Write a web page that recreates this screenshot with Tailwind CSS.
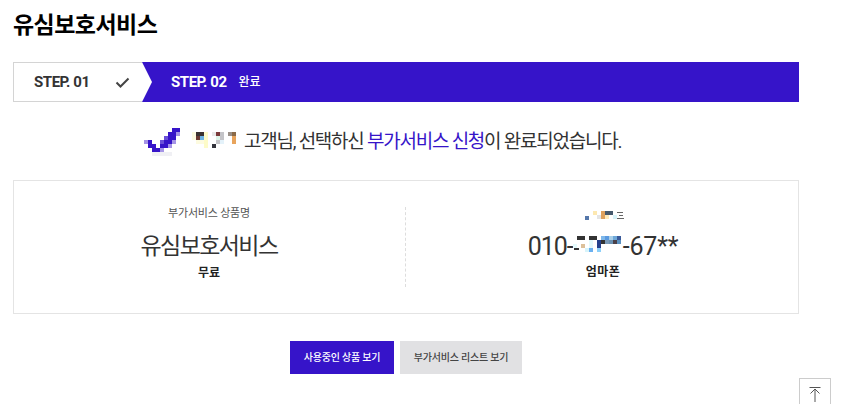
<!DOCTYPE html>
<html lang="ko">
<head>
  <meta charset="UTF-8">
  <title>유심보호서비스</title>
  <script src="https://cdn.jsdelivr.net/npm/@tailwindcss/browser@4"></script>
</head>
<body class="bg-white text-[#222] font-['Roboto','Noto_Sans_CJK_KR',sans-serif] overflow-hidden h-[404px] relative">
  <div class="w-[786px] ml-[13px]">
    <h1 class="h-[62px] pt-[9px] text-[23px] leading-[33px] font-bold text-black tracking-[-0.55px]">유심보호서비스</h1>

    <!-- steps -->
    <div class="flex h-10 bg-[#3614c9]">
      <div class="relative w-[129px] border border-r-0 border-[#d4d4d4] bg-white flex items-center pl-5 text-[15px] font-bold text-[#333] tracking-[-0.45px]">
        <span>STEP. 01</span>
        <svg class="absolute left-[101px] top-[13px]" width="15" height="13" viewBox="0 0 15 13" fill="none" stroke="#444" stroke-width="2"><path d="M1.5 6.5 L5.5 10.5 L13.5 2.5"/></svg>
        <svg class="absolute left-[128px] -top-px" width="10" height="40" viewBox="0 0 10 40"><path d="M0 0 L10 20 L0 40 Z" fill="#fff"/></svg>
      </div>
      <div class="flex items-center pl-[29px] text-white">
        <span class="text-[15px] font-bold tracking-[-0.45px]">STEP. 02</span>
        <span class="ml-3 text-[12px] font-medium">완료</span>
      </div>
    </div>

    <!-- message -->
    <div class="flex items-center h-[78px] pl-[131px] pt-[2px]">
      <svg width="36" height="28" viewBox="0 0 36 28" shape-rendering="crispEdges">
        <path fill="#3614c9" d="M28 0h8v4h-8zM24 4h8v4h-8zM24 8h8v4h-8zM4 12h4v4H4zM20 12h8v4h-8zM4 16h8v4H4zM16 16h8v4h-8zM8 20h8v4H8z"/>
        <path fill="#6a50d8" d="M20 8h4v4h-4zM16 12h4v4h-4z"/>
        <path fill="#a594e6" d="M32 4h4v4h-4zM0 12h4v4H0zM28 12h4v4h-4zM24 16h4v4h-4zM16 20h4v4h-4z"/>
        <path fill="#f0f0f4" d="M8 24h20v4H8z"/>
      </svg>
      <svg class="ml-[12px] mr-[8px]" width="44" height="20" viewBox="0 0 44 20" shape-rendering="crispEdges">
        <path fill="#fdfbe0" d="M0 0h4v8H0zM4 8h8v4H4z"/>
        <path fill="#3a3230" d="M4 0h8v4H4z"/>
        <path fill="#6b3a32" d="M4 4h4v4H4z"/>
        <path fill="#6db4e4" d="M8 4h4v4H8z"/>
        <path fill="#fdfbc8" d="M12 0h4v16h-4z"/>
        <path fill="#e8e8e8" d="M20 0h4v4h-4z"/>
        <path fill="#7a3a3a" d="M24 0h4v4h-4z"/>
        <path fill="#c4c4c8" d="M28 0h4v8h-4zM24 8h4v4h-4z"/>
        <path fill="#dcf4e8" d="M24 4h4v4h-4z"/>
        <path fill="#e4f2fa" d="M28 8h4v4h-4z"/>
        <path fill="#34343c" d="M20 12h4v4h-4z"/>
        <path fill="#9a9088" d="M36 0h4v4h-4z"/>
        <path fill="#8a6a48" d="M40 0h4v4h-4z"/>
        <path fill="#e8a45c" d="M40 4h4v8h-4z"/>
      </svg>
      <p class="text-[19px] leading-[26px] tracking-[-1.25px] text-[#333]">고객님, 선택하신 <span class="text-[#3614c9]">부가서비스 신청</span>이 완료되었습니다.</p>
    </div>

    <!-- result box -->
    <div class="grid grid-cols-2 h-[134px] border border-[#e4e4e4] pt-[26px]">
      <div class="relative h-[80px] flex flex-col items-center pr-[2px]">
        <p class="text-[11px] leading-4 text-[#555] tracking-[-0.2px] -mt-[1px]">부가서비스 상품명</p>
        <p class="mt-[9px] text-[23px] leading-[32px] text-[#333] tracking-[-1.6px]">유심보호서비스</p>
        <p class="mt-[2px] text-[12px] leading-4 font-bold text-[#222]">무료</p>
        <div class="absolute right-0 top-0 h-[80px] border-r border-dashed border-[#dddddd]"></div>
      </div>
      <div class="flex flex-col items-center pl-[2px]">
        <div class="flex items-end h-[15px] -mt-[1px] ml-[3px]">
          <svg width="40" height="10" viewBox="0 0 40 10" shape-rendering="crispEdges">
            <path fill="#5577aa" d="M0 5h4v4H0z"/>
            <path fill="#fde8b0" d="M8 0h4v4H8z"/>
            <path fill="#e4e4e4" d="M12 4h4v4h-4z"/>
            <path fill="#dda15e" d="M16 0h4v8h-4z"/>
            <path fill="#44586c" d="M20 0h8v4h-8z"/>
            <path fill="#fde8b8" d="M20 4h4v4h-4z"/>
            <path fill="#d8f4fa" d="M28 4h4v4h-4z"/>
            <path fill="#666" d="M32 1h6v1h-6zM34 4h4v1h-4zM32 7h7v1h-7z"/>
          </svg>
        </div>
        <div class="mt-[10px] flex items-center text-[25px] leading-[32px] text-[#333] tracking-[-0.2px]">
          <span class="tracking-[-1px]">010-</span>
          <svg class="self-start mt-[5px]" width="50" height="24" viewBox="0 0 50 24" shape-rendering="crispEdges">
            <path fill="#333" d="M4 0h8v4H4zM16 0h8v4h-8z"/>
            <path fill="#7fb8ea" d="M28 0h4v4h-4z"/>
            <path fill="#5a9ae0" d="M32 0h4v4h-4z"/>
            <path fill="#a9cfe8" d="M36 0h4v4h-4z"/>
            <path fill="#6ea8d8" d="M40 0h4v4h-4z"/>
            <path fill="#3a5a9a" d="M44 0h4v4h-4z"/>
            <path fill="#e4fafc" d="M16 4h4v4h-4zM0 8h4v4H0zM16 8h4v4h-4z"/>
            <path fill="#24408c" d="M24 4h4v8h-4z"/>
            <path fill="#333" d="M28 4h4v4h-4z"/>
            <path fill="#7a9ab8" d="M32 4h4v4h-4z"/>
            <path fill="#6a90b0" d="M36 4h4v4h-4z"/>
            <path fill="#4a4048" d="M40 4h4v4h-4z"/>
            <path fill="#5a90c0" d="M44 4h4v4h-4z"/>
            <path fill="#dcc09a" d="M8 8h4v4H8z"/>
            <path fill="#d8f4fa" d="M12 12h4v4h-4z"/>
            <path fill="#6ab0f0" d="M16 12h4v4h-4z"/>
            <path fill="#8cd0fa" d="M24 12h4v4h-4z"/>
            <path fill="#333" d="M1 12h5v2H1z"/>
          </svg>
          <span>-67**</span>
        </div>
        <p class="mt-[1px] text-[12px] leading-4 font-bold text-[#222] tracking-[0.4px]">엄마폰</p>
      </div>
    </div>

    <!-- buttons -->
    <div class="flex justify-center gap-1.5 mt-[27px] text-[10px] tracking-[-0.2px]">
      <a class="w-[104px] h-[33px] flex items-center justify-center bg-[#3614c9] text-white font-medium">사용중인 상품 보기</a>
      <a class="w-[122px] h-[33px] flex items-center justify-center bg-[#e1e1e3] text-[#444] font-medium">부가서비스 리스트 보기</a>
    </div>
  </div>

  <!-- top button -->
  <button class="absolute left-[799px] top-[378px] w-[32px] h-[32px] bg-white border border-[#cccccc]">
    <svg class="absolute left-[8px] top-[7px]" width="14" height="16" viewBox="0 0 14 16" fill="none" stroke="#555" stroke-width="1"><path d="M1.5 1.5h11M7 3v13M2.5 7.5 7 3l4.5 4.5"/></svg>
  </button>
</body>
</html>
